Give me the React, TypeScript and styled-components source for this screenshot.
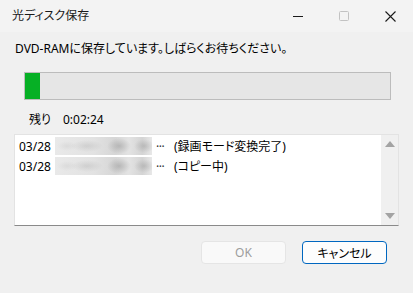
import React from "react";
import styled, { createGlobalStyle } from "styled-components";

const Global = createGlobalStyle`
  html, body { margin: 0; padding: 0; background: #f0f0f0; }
  body {
    font-family: "Noto Sans", "Noto Sans CJK JP", sans-serif;
    font-size: 12px;
    color: #000;
    font-feature-settings: "palt";
  }
`;

const Window = styled.div`
  width: 413px;
  height: 293px;
  display: flex;
  flex-direction: column;
  background: #f0f0f0;
  overflow: hidden;
`;

const TitleBar = styled.div`
  height: 32px;
  flex: none;
  display: flex;
  align-items: center;
  background: #f3f3f3;
`;

const Title = styled.div`
  flex: 1;
  padding-left: 12px;
  font-size: 12px;
  line-height: 16px;
  color: #1a1a1a;
`;

const CaptionButton = styled.div`
  width: 46px;
  height: 32px;
  display: flex;
  align-items: center;
  justify-content: center;
`;

const Body = styled.div`
  flex: 1;
  display: flex;
  flex-direction: column;
  padding: 0 14px;
`;

const Message = styled.div`
  margin-top: 9px;
  padding-left: 1px;
  line-height: 16px;
`;

const Progress = styled.div`
  margin: 15px 0 0 10px;
  width: 365px;
  height: 26px;
  border: 1px solid #bcbcbc;
  background: #e6e6e6;
  display: flex;
`;

const ProgressFill = styled.div`
  height: 100%;
  background: #06b025;
`;

const Remaining = styled.div`
  margin-top: 12px;
  padding-left: 15px;
  line-height: 16px;
  display: flex;
  gap: 12px;
`;

const ListBox = styled.div`
  margin-top: 6px;
  width: 383px;
  height: 90px;
  background: #fff;
  border: 1px solid #e3e3e3;
  border-bottom-color: #8a8a8a;
  display: flex;
`;

const Rows = styled.div`
  flex: 1;
  padding: 1px 0 0 4px;
  display: flex;
  flex-direction: column;
`;

const Row = styled.div`
  height: 20px;
  display: flex;
  align-items: center;
  white-space: nowrap;
`;

const DateText = styled.span`
  width: 36px;
`;

const Blurred = styled.span`
  width: 97px;
  height: 18px;
  margin-right: 4px;
  background:
    radial-gradient(ellipse 12px 8px at 64px 9px, rgba(140,140,140,0.45), transparent),
    radial-gradient(ellipse 10px 7px at 89px 9px, rgba(140,140,140,0.4), transparent),
    radial-gradient(ellipse 16px 6px at 32px 9px, rgba(170,170,170,0.35), transparent),
    radial-gradient(ellipse 10px 5px at 12px 9px, rgba(190,190,190,0.3), transparent),
    linear-gradient(to right, #e9e9e9, #e2e2e2 40%, #d6d6d6 62%, #e3e3e3 76%, #d4d4d4 90%, #e8e8e8);
`;

const Dots = styled.span`
  width: 18px;
  letter-spacing: -0.5px;
  color: #333;
`;

const Scrollbar = styled.div`
  width: 17px;
  background: #f0f0f0;
  display: flex;
  flex-direction: column;
  justify-content: space-between;
  align-items: center;
  padding: 6px 0 6px;
`;

const Arrow = styled.div<{ $down?: boolean }>`
  width: 0;
  height: 0;
  border-left: 5px solid transparent;
  border-right: 5px solid transparent;
  ${(p) =>
    p.$down
      ? "border-top: 6px solid #a3a3a3;"
      : "border-bottom: 6px solid #a3a3a3;"}
`;

const ButtonRow = styled.div`
  margin-top: 15px;
  padding-right: 12px;
  display: flex;
  justify-content: flex-end;
  gap: 16px;
`;

const Button = styled.div<{ $primary?: boolean; $disabled?: boolean }>`
  width: 85px;
  height: 23px;
  box-sizing: border-box;
  border-radius: 4px;
  display: flex;
  align-items: center;
  justify-content: center;
  font-size: 12px;
  background: ${(p) => (p.$disabled ? "#f9f9f9" : "#fdfdfd")};
  color: ${(p) => (p.$disabled ? "#9d9d9d" : "#000")};
  border: ${(p) => (p.$primary ? "1.5px solid #0067c0" : "1px solid #e5e5e5")};
`;

export default function App() {
  return (
    <>
      <Global />
      <Window>
        <TitleBar>
          <Title>光ディスク保存</Title>
          <CaptionButton>
            <svg width="10" height="10" viewBox="0 0 10 10">
              <line x1="0" y1="5.5" x2="10" y2="5.5" stroke="#1a1a1a" strokeWidth="1" />
            </svg>
          </CaptionButton>
          <CaptionButton>
            <svg width="10" height="10" viewBox="0 0 10 10">
              <rect x="0.5" y="0.5" width="9" height="9" rx="1" fill="none" stroke="#c2c2c2" strokeWidth="1" />
            </svg>
          </CaptionButton>
          <CaptionButton>
            <svg width="11" height="11" viewBox="0 0 11 11">
              <path d="M0.5 0.5 L10.5 10.5 M10.5 0.5 L0.5 10.5" stroke="#1a1a1a" strokeWidth="1.1" />
            </svg>
          </CaptionButton>
        </TitleBar>
        <Body>
          <Message>DVD-RAMに保存しています。しばらくお待ちください。</Message>
          <Progress>
            <ProgressFill style={{ width: "15px" }} />
          </Progress>
          <Remaining>
            <span>残り</span>
            <span>0:02:24</span>
          </Remaining>
          <ListBox>
            <Rows>
              <Row>
                <DateText>03/28</DateText>
                <Blurred />
                <Dots>···</Dots>
                <span>(録画モード変換完了)</span>
              </Row>
              <Row>
                <DateText>03/28</DateText>
                <Blurred />
                <Dots>···</Dots>
                <span>(コピー中)</span>
              </Row>
            </Rows>
            <Scrollbar>
              <Arrow />
              <Arrow $down />
            </Scrollbar>
          </ListBox>
          <ButtonRow>
            <Button $disabled>OK</Button>
            <Button $primary>キャンセル</Button>
          </ButtonRow>
        </Body>
      </Window>
    </>
  );
}
